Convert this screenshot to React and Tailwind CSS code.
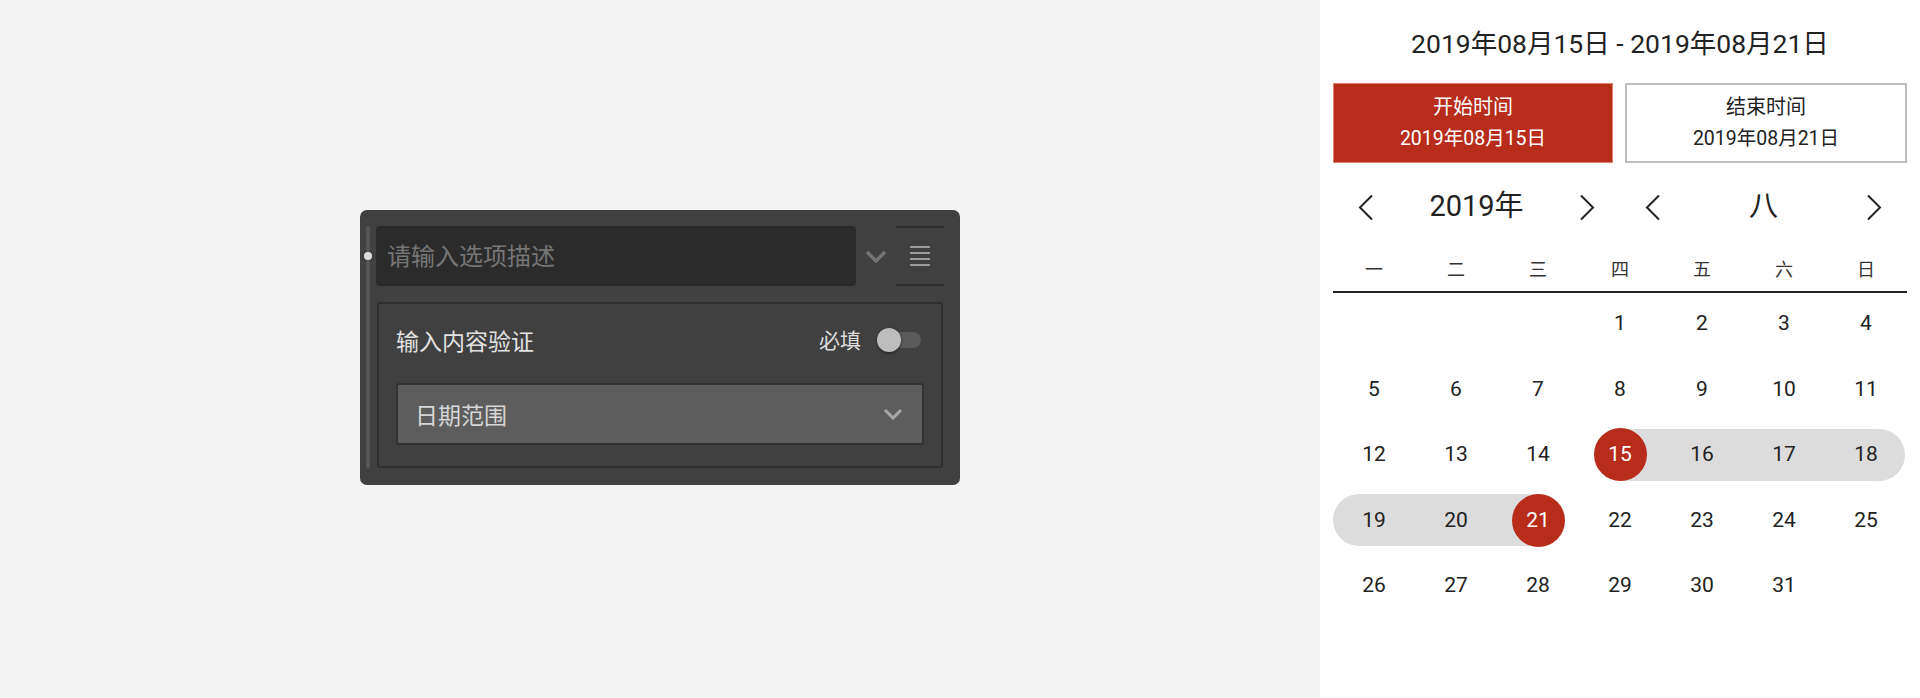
import React from "react";

const weeks = [
  [null, null, null, 1, 2, 3, 4],
  [5, 6, 7, 8, 9, 10, 11],
  [12, 13, 14, 15, 16, 17, 18],
  [19, 20, 21, 22, 23, 24, 25],
  [26, 27, 28, 29, 30, 31, null],
];

const START = 15;
const END = 21;

function NavArrow({ dir }) {
  return (
    <svg width="16" height="27" viewBox="0 0 16 27" fill="none">
      {dir === "left" ? (
        <polyline points="14,1.5 2,13.5 14,25.5" stroke="#222" strokeWidth="2" />
      ) : (
        <polyline points="2,1.5 14,13.5 2,25.5" stroke="#222" strokeWidth="2" />
      )}
    </svg>
  );
}

function DayCell({ day, col }) {
  if (!day) return <div className="h-[65.5px]" />;
  const inRange = day >= START && day <= END;
  const isEdge = day === START || day === END;

  let band = null;
  if (inRange) {
    let cls = "absolute top-1/2 -translate-y-1/2 h-[52px] bg-[#dcdcdc]";
    if (day === START) cls += " left-1/2 right-0";
    else if (day === END) cls += " left-0 right-1/2";
    else cls += " left-0 right-0";
    if (col === 6 && day !== END) cls += " rounded-r-full right-[2px]";
    if (col === 0 && day !== START) cls += " rounded-l-full";
    band = <div className={cls} />;
  }

  return (
    <div className="relative h-[65.5px] flex items-center justify-center">
      {band}
      {isEdge ? (
        <div className="relative w-[53px] h-[53px] rounded-full bg-[#b72c1b] flex items-center justify-center text-white">
          {day}
        </div>
      ) : (
        <span className="relative text-[#222]">{day}</span>
      )}
    </div>
  );
}

export default function App() {
  return (
    <div className="flex w-[1920px] h-[698px] overflow-hidden">
      {/* editor side */}
      <div className="flex-1 bg-[#f4f4f4] flex justify-center pt-[210px] font-['Noto_Sans_CJK_SC','Noto_Sans',sans-serif]">
        <div className="w-[600px] h-[275px] bg-[#404040] rounded-[7px] pl-[6px] pr-[16px] pt-[16px] pb-[16px] flex">
          <div className="relative w-[4px] bg-[#555] rounded-full">
            <div className="absolute left-[-2px] top-[26px] w-[8px] h-[8px] rounded-full bg-[#dcdcdc]" />
          </div>
          <div className="ml-[6px] flex-1 flex flex-col gap-[16px]">
            <div className="flex h-[60px]">
              <div className="w-[480px] bg-[#2b2b2b] rounded-[4px] flex items-center pl-[11px] pb-[2px] text-[24px] text-[#767676]">
                请输入选项描述
              </div>
              <div className="w-[40px] flex items-center justify-center">
                <svg width="22" height="13" viewBox="0 0 22 13" fill="none">
                  <polyline points="2,2 11,11 20,2" stroke="#737373" strokeWidth="3.5" />
                </svg>
              </div>
              <div className="w-[48px] border-y-2 border-[#2e2e2e] flex flex-col items-center justify-center gap-[4px]">
                <div className="w-[20px] h-[2px] bg-[#9a9a9a]" />
                <div className="w-[20px] h-[2px] bg-[#9a9a9a]" />
                <div className="w-[20px] h-[2px] bg-[#9a9a9a]" />
                <div className="w-[20px] h-[2px] bg-[#9a9a9a]" />
              </div>
            </div>
            <div className="mx-[1px] h-[166px] border-2 border-[#2f2f2f] rounded-[3px] px-[17px] pt-[16px]">
              <div className="flex items-center justify-between h-[40px]">
                <span className="text-[23px] text-[#e2e2e2]">输入内容验证</span>
                <div className="flex items-center">
                  <span className="text-[21px] text-[#dedede] mr-[16px]">必填</span>
                  <div className="relative w-[44px] h-[24px] mr-[3px]">
                    <div className="absolute left-[13px] right-0 top-[4px] h-[16px] rounded-full bg-[#5a5a5a]" />
                    <div className="absolute left-0 top-0 w-[24px] h-[24px] rounded-full bg-[#bdbdbd] shadow-[0_1px_3px_rgba(0,0,0,0.5)]" />
                  </div>
                </div>
              </div>
              <div className="mt-[23px] h-[62px] bg-[#5d5d5d] border-2 border-[#333] rounded-[3px] flex items-center justify-between pl-[17px] pr-[19px]">
                <span className="text-[23px] text-[#d6d6d6]">日期范围</span>
                <svg width="20" height="12" viewBox="0 0 20 12" fill="none">
                  <polyline points="2,2 10,10 18,2" stroke="#a8a8a8" strokeWidth="3" />
                </svg>
              </div>
            </div>
          </div>
        </div>
      </div>

      {/* calendar side */}
      <div className="w-[600px] bg-white px-[13px] font-['Roboto','Noto_Sans_CJK_SC',sans-serif] text-[#222]">
        <div className="pt-[26px] h-[62px] leading-[36px] text-[26.5px] text-center">
          2019年08月15日 - 2019年08月21日
        </div>
        <div className="mt-[21px] flex gap-[12px]">
          <div className="flex-1 h-[80px] bg-[#b72c1b] border border-[#e0806f] flex flex-col items-center justify-center text-white leading-[32px]">
            <span className="text-[20px]">开始时间</span>
            <span className="text-[19.5px]">2019年08月15日</span>
          </div>
          <div className="flex-1 h-[80px] border-2 border-[#bdbdbd] flex flex-col items-center justify-center text-[#222] leading-[32px]">
            <span className="text-[20px]">结束时间</span>
            <span className="text-[19.5px]">2019年08月21日</span>
          </div>
        </div>
        <div className="mt-[19px] h-[50px] flex">
          <div className="flex-1 flex items-center justify-between px-[25px]">
            <NavArrow dir="left" />
            <span className="text-[29px]">2019年</span>
            <NavArrow dir="right" />
          </div>
          <div className="flex-1 flex items-center justify-between px-[25px]">
            <NavArrow dir="left" />
            <span className="text-[29px]">八</span>
            <NavArrow dir="right" />
          </div>
        </div>
        <div className="mt-[15px] h-[44px] grid grid-cols-7 text-[18px] text-[#333]">
          {["一", "二", "三", "四", "五", "六", "日"].map((d) => (
            <div key={d} className="flex items-center justify-center">
              {d}
            </div>
          ))}
        </div>
        <div className="h-[2px] bg-[#222]" />
        <div className="-mt-[2px] grid grid-cols-7 text-[21px]">
          {weeks.map((week, wi) =>
            week.map((day, ci) => <DayCell key={wi + "-" + ci} day={day} col={ci} />)
          )}
        </div>
      </div>
    </div>
  );
}
